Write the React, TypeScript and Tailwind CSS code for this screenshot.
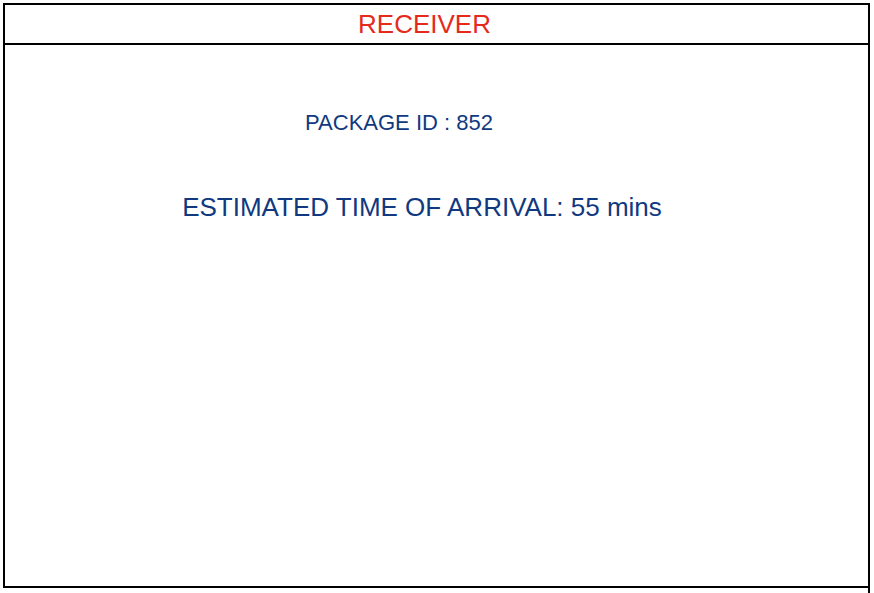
import React from 'react';

export default function App() {
  return (
    <div className="w-[874px] h-[593px] bg-white pl-[3px] pt-[3px] overflow-hidden font-['Liberation_Sans',Arial,sans-serif]">
      {/* right rule runs past the bottom edge */}
      <div className="w-[867px] h-[590px] border-r-2 border-black">
        <div className="w-[865px] h-[585px] border-l-2 border-t-2 border-b-2 border-black flex flex-col">
          {/* Header */}
          <div className="h-[40px] border-b-2 border-black flex justify-center pt-[6px] pr-[24px]">
            <span className="text-[26px] leading-none text-[#e52a1c]">RECEIVER</span>
          </div>

          {/* Body */}
          <div className="flex flex-col items-center pt-[67px] pr-[29px] text-[#10397f]">
            <div className="text-[22px] leading-none mr-[46px]">PACKAGE ID : 852</div>
            <div className="text-[26px] leading-none mt-[60px]">
              ESTIMATED TIME OF ARRIVAL: 55 mins
            </div>
          </div>
        </div>
      </div>
    </div>
  );
}
